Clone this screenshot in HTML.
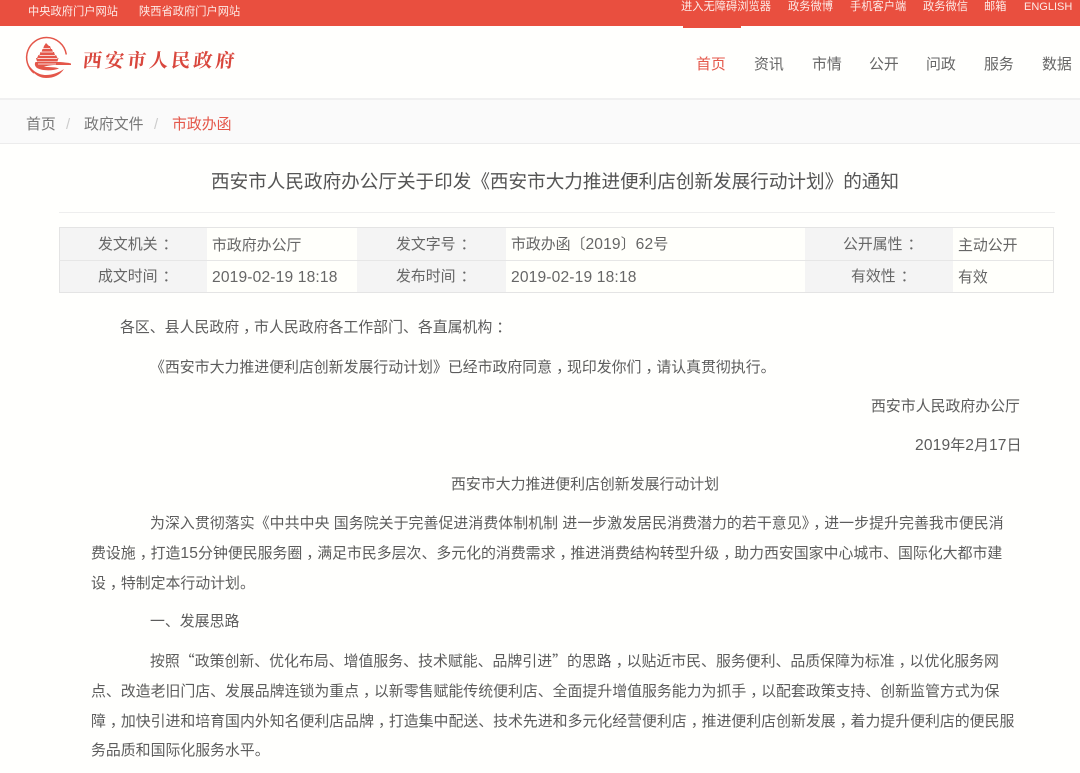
<!DOCTYPE html>
<html lang="zh-CN"><head><meta charset="utf-8"><title>西安市人民政府</title>
<style>
html,body{margin:0;padding:0}
body{width:1080px;height:773px;overflow:hidden;position:relative;background:#fffffd;font-family:"Liberation Sans","Noto Sans CJK SC",sans-serif;color:#666;font-size:14.9px}
.a{position:absolute;white-space:nowrap;line-height:20px}
.b{position:absolute}
.w{color:#fdeae6;font-size:11.25px}
.n{font-size:14.9px;top:55px}
.c{font-size:14.9px;color:#666}
.p{color:#5c5c5c;font-size:14.9px}
i{font-family:"Noto Sans CJK SC",sans-serif;font-style:normal;position:relative;left:4px}
.c i{left:5px}
em{font-family:"Noto Sans CJK SC",sans-serif;font-style:normal}
.d{font-size:15.6px;letter-spacing:.15px}
</style></head><body>
<div class="b" style="left:0;top:0;width:1080px;height:26px;background:#e94f3f"></div>
<div class="b" style="left:683px;top:26px;width:58px;height:2px;background:#e94f3f"></div>
<div class="a w" style="left:28px;top:2px">中央政府门户网站</div>
<div class="a w" style="left:139px;top:2px">陕西省政府门户网站</div>
<div class="a w" style="left:681px;top:-3px">进入无障碍浏览器</div>
<div class="a w" style="left:788px;top:-3px">政务微博</div>
<div class="a w" style="left:850px;top:-3px">手机客户端</div>
<div class="a w" style="left:923px;top:-3px">政务微信</div>
<div class="a w" style="left:984px;top:-3px">邮箱</div>
<div class="a w" style="left:1024px;top:-3px;font-size:11px">ENGLISH</div>

<svg class="b" style="left:24px;top:35px" width="50" height="46" viewBox="24 35 50 46">
<path d="M34 73A20 20 0 0 1 46.500 37.500A20 20 0 0 1 66.300 54.500" fill="none" stroke="#e4574a" stroke-width="1.500"/>
<path d="M26.500 60C30 72 38 78 46 78C54 78 60 75 64 69C58 73 52 75 46 75C38 75 30 70 26.500 60Z" fill="#e4574a"/>
<path d="M46 43L49 46H50L51 49H52L53 52H54L55 55H56L57.500 58H58.500L57.500 61.500H37L36 58H37L38.500 55H39.500L40.500 52H41.500L42.500 49H43L44 46Z" fill="#e4574a"/>
<path d="M43 48.500H50M41 52H53M39.500 55.500H55.500M37.500 58.500H57.500" stroke="#fff" stroke-width=".8"/>
<path d="M35.500 62H60C64 62.500 68 62.500 71 63.500V65H56C51 65 46 66 44 67C49 67 56 67 59 68.500C53 71 42 71 37 68C34.500 66 34.500 63.500 35.500 62Z" fill="#e4574a"/>
<path d="M38 64H56" stroke="#fff" stroke-width=".8"/>
</svg>
<div class="a" style="left:83px;top:44px;font:bold 19px/32px 'Noto Serif CJK SC',serif;color:#d9473d;letter-spacing:3.100px;transform:skewX(-6deg);transform-origin:left">西安市人民政府</div>

<div class="a n" style="left:696px;color:#e4574a">首页</div>
<div class="a n" style="left:754px">资讯</div>
<div class="a n" style="left:812px">市情</div>
<div class="a n" style="left:869px">公开</div>
<div class="a n" style="left:926px">问政</div>
<div class="a n" style="left:984px">服务</div>
<div class="a n" style="left:1042px">数据</div>

<div class="b" style="left:0;top:98px;width:1080px;height:46px;box-sizing:border-box;background:#fafafa;border-top:2px solid #f0f0f0;border-bottom:1px solid #ececec"></div>
<div class="a" style="left:26px;top:115px;color:#777">首页</div>
<div class="a" style="left:66px;top:115px;color:#ccc">/</div>
<div class="a" style="left:84px;top:115px;color:#777">政府文件</div>
<div class="a" style="left:154px;top:115px;color:#ccc">/</div>
<div class="a" style="left:172px;top:115px;color:#e4574a">市政办函</div>

<div class="a" style="left:211px;top:171px;font-size:18.6px;line-height:22px;color:#555">西安市人民政府办公厅关于印发《西安市大力推进便利店创新发展行动计划》的通知</div>
<div class="b" style="left:59px;top:212px;width:996px;height:1px;background:#eee"></div>

<div class="b" style="left:59px;top:227px;width:995px;height:66px;box-sizing:border-box;border:1px solid #e4e4e4;background:#fffffb"></div>
<div class="b" style="left:60px;top:228px;width:147px;height:64px;background:#f4f4f4"></div>
<div class="b" style="left:357px;top:228px;width:149px;height:64px;background:#f4f4f4"></div>
<div class="b" style="left:805px;top:228px;width:148px;height:64px;background:#f4f4f4"></div>
<div class="b" style="left:59px;top:260px;width:995px;height:1px;background:#e6e6e6"></div>

<div class="a c" style="left:98px;top:234px">发文机关<i>：</i></div>
<div class="a c" style="left:212px;top:236px">市政府办公厅</div>
<div class="a c" style="left:396px;top:234px">发文字号<i>：</i></div>
<div class="a c" style="left:511px;top:235px">市政办函〔<span class="d">2019</span>〕<span class="d">62</span>号</div>
<div class="a c" style="left:843px;top:234px">公开属性<i>：</i></div>
<div class="a c" style="left:958px;top:236px">主动公开</div>
<div class="a c" style="left:98px;top:266px">成文时间<i>：</i></div>
<div class="a c d" style="left:212px;top:268px">2019-02-19 18:18</div>
<div class="a c" style="left:396px;top:266px">发布时间<i>：</i></div>
<div class="a c d" style="left:511px;top:268px">2019-02-19 18:18</div>
<div class="a c" style="left:851px;top:266px">有效性<i>：</i></div>
<div class="a c" style="left:958px;top:268px">有效</div>

<div class="a p" style="left:120px;top:317px">各区、县人民政府<i>，</i>市人民政府各工作部门、各直属机构<i>：</i></div>
<div class="a p" style="left:150px;top:357px">《西安市大力推进便利店创新发展行动计划》已经市政府同意<i>，</i>现印发你们<i>，</i>请认真贯彻执行。</div>
<div class="a p" style="left:871px;top:397px">西安市人民政府办公厅</div>
<div class="a p" style="left:915px;top:436px"><span class="d">2019</span>年<span class="d">2</span>月<span class="d">17</span>日</div>
<div class="a p" style="left:451px;top:475px">西安市大力推进便利店创新发展行动计划</div>
<div class="a p" style="left:150px;top:513px;letter-spacing:.07px">为深入贯彻落实《中共中央 国务院关于完善促进消费体制机制 进一步激发居民消费潜力的若干意见》<i>，</i>进一步提升完善我市便民消</div>
<div class="a p" style="left:91px;top:543px">费设施<i>，</i>打造<span class="d">15</span>分钟便民服务圈<i>，</i>满足市民多层次、多元化的消费需求<i>，</i>推进消费结构转型升级<i>，</i>助力西安国家中心城市、国际化大都市建</div>
<div class="a p" style="left:91px;top:573px">设<i>，</i>特制定本行动计划。</div>
<div class="a p" style="left:150px;top:612px">一、发展思路</div>
<div class="a p" style="left:150px;top:651px">按照<em>“</em>政策创新、优化布局、增值服务、技术赋能、品牌引进<em>”</em>的思路<i>，</i>以贴近市民、服务便利、品质保障为标准<i>，</i>以优化服务网</div>
<div class="a p" style="left:91px;top:681px">点、改造老旧门店、发展品牌连锁为重点<i>，</i>以新零售赋能传统便利店、全面提升增值服务能力为抓手<i>，</i>以配套政策支持、创新监管方式为保</div>
<div class="a p" style="left:91px;top:711px">障<i>，</i>加快引进和培育国内外知名便利店品牌<i>，</i>打造集中配送、技术先进和多元化经营便利店<i>，</i>推进便利店创新发展<i>，</i>着力提升便利店的便民服</div>
<div class="a p" style="left:91px;top:741px">务品质和国际化服务水平。</div>
</body></html>
